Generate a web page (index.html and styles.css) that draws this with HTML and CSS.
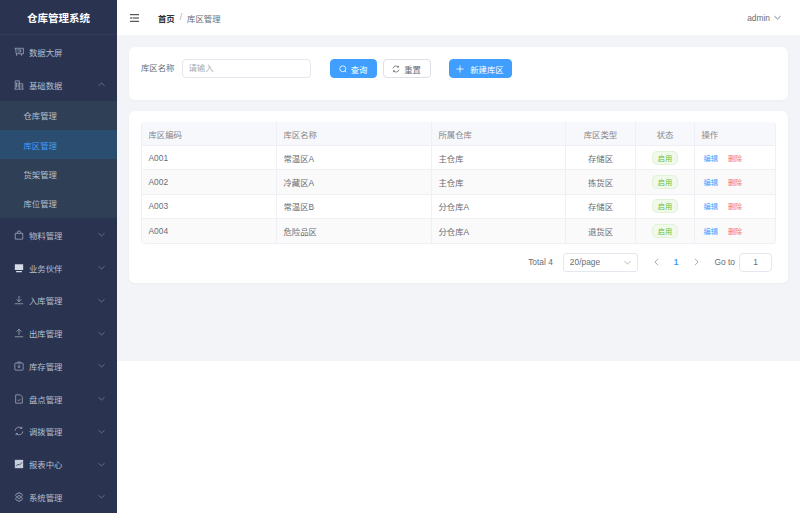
FILE: index.html
```html
<!DOCTYPE html>
<html lang="zh-CN">
<head>
<meta charset="utf-8">
<title>库区管理</title>
<link rel="stylesheet" href="styles.css">
</head>
<body>
<div class="layout">
  <aside class="sidebar">
    <div class="brand">仓库管理系统</div>
    <nav class="menu">
      <div class="item"><svg class="ico" viewBox="0 0 12 12"><path d="M.7 1.500h10.600v6.600H2.600L2 1.500M3 8.100v2.400M9 8.100v2.400M4 3.500h4.500L7.600 6H4.600"/></svg><span>数据大屏</span></div>
      <div class="item"><svg class="ico" viewBox="0 0 12 12"><path d="M1.500 11V1h5v10M6.500 4.500h4V11M.5 11h11M3 3v6M5 3v6M8.500 6.500V9"/></svg><span>基础数据</span><svg class="arr" viewBox="0 0 8 5"><path d="M.5 4 4 .8 7.500 4"/></svg></div>
      <div class="sub">
        <div class="subitem">仓库管理</div>
        <div class="subitem on">库区管理</div>
        <div class="subitem">货架管理</div>
        <div class="subitem">库位管理</div>
      </div>
      <div class="item"><svg class="ico" viewBox="0 0 12 12"><path d="M1.500 4h9v7h-9zM4 4V2.300C4 .7 8 .7 8 2.300V4"/></svg><span>物料管理</span><svg class="arr" viewBox="0 0 8 5"><path d="M.5 1 4 4.200 7.500 1"/></svg></div>
      <div class="item"><svg class="ico solid" viewBox="0 0 12 12"><path d="M1 1.500h10v7H1zM2.500 9.500h7V11h-7z"/></svg><span>业务伙伴</span><svg class="arr" viewBox="0 0 8 5"><path d="M.5 1 4 4.200 7.500 1"/></svg></div>
      <div class="item"><svg class="ico" viewBox="0 0 12 12"><path d="M1 10.500h10M6 1v7M3 5.300 6 8l3-2.700"/></svg><span>入库管理</span><svg class="arr" viewBox="0 0 8 5"><path d="M.5 1 4 4.200 7.500 1"/></svg></div>
      <div class="item"><svg class="ico" viewBox="0 0 12 12"><path d="M1 10.500h10M6 8.500V1.500M3 4.300 6 1.500l3 2.800"/></svg><span>出库管理</span><svg class="arr" viewBox="0 0 8 5"><path d="M.5 1 4 4.200 7.500 1"/></svg></div>
      <div class="item"><svg class="ico" viewBox="0 0 12 12"><rect x="1" y="2.500" width="10" height="8.500" rx="1"/><path d="M3.500 2.500C3.500 .5 8.500 .5 8.500 2.500M6 4v4M4.300 6.500 6 8l1.700-1.500"/></svg><span>库存管理</span><svg class="arr" viewBox="0 0 8 5"><path d="M.5 1 4 4.200 7.500 1"/></svg></div>
      <div class="item"><svg class="ico" viewBox="0 0 12 12"><path d="M2 1h5.500L10 3.500V11H2zM4.300 7l1.300 1.300L7.800 6"/></svg><span>盘点管理</span><svg class="arr" viewBox="0 0 8 5"><path d="M.5 1 4 4.200 7.500 1"/></svg></div>
      <div class="item"><svg class="ico" viewBox="0 0 12 12"><path d="M1.300 5.500A4.700 4.700 0 0 1 9 2.500M10.700 6.500A4.700 4.700 0 0 1 3 9.500M9.500 .8v2.200H7.300M2.500 11.200V9h2.200"/></svg><span>调拨管理</span><svg class="arr" viewBox="0 0 8 5"><path d="M.5 1 4 4.200 7.500 1"/></svg></div>
      <div class="item"><svg class="ico" viewBox="0 0 12 12"><path class="fill" d="M1 1h10v10H1z"/><path class="cut" d="M2.300 8.800 4.800 6.200l1.700 1.200 3.200-3.400"/></svg><span>报表中心</span><svg class="arr" viewBox="0 0 8 5"><path d="M.5 1 4 4.200 7.500 1"/></svg></div>
      <div class="item"><svg class="ico" viewBox="0 0 12 12"><path d="M4.800 1h2.400l.4 1.400 1.400-.4L10.200 4l-1 1.100v1.800l1 1.100-1.200 2-1.400-.4L7.200 11H4.800l-.4-1.400-1.400.4-1.200-2 1-1.100V5.100L1.800 4 3 2l1.400.4z"/><circle cx="6" cy="6" r="1.800"/></svg><span>系统管理</span><svg class="arr" viewBox="0 0 8 5"><path d="M.5 1 4 4.200 7.500 1"/></svg></div>
    </nav>
  </aside>
  <div class="main">
    <header class="topbar">
      <svg class="burger" viewBox="0 0 9 8"><path d="M0 .7h9M2.500 4H9M0 7.300h9M0 4h2"/></svg>
      <div class="crumbs"><b>首页</b><i>/</i><span>库区管理</span></div>
      <div class="user">admin<svg viewBox="0 0 8 5"><path d="M.5 1 4 4.200 7.500 1"/></svg></div>
    </header>
    <div class="content">
      <section class="card search">
        <label>库区名称</label>
        <div class="input">请输入</div>
        <button class="btn primary first"><svg viewBox="0 0 10 10"><circle cx="4.700" cy="4.700" r="3.700"/><path d="M7.500 7.500 9 9"/></svg>查询</button>
        <button class="btn reset"><svg viewBox="0 0 10 10"><path d="M1.200 4.200A3.900 3.900 0 0 1 8 2.600M8.800 5.800A3.900 3.900 0 0 1 2 7.400M8.200 1v1.800H6.400M1.800 9V7.200h1.800"/></svg>重置</button>
        <button class="btn primary add"><svg viewBox="0 0 10 10"><path d="M5 .5v9M.5 5h9"/></svg>新建库区</button>
      </section>
      <section class="card list">
        <div class="table">
          <div class="row head"><div>库区编码</div><div>库区名称</div><div>所属仓库</div><div class="c">库区类型</div><div class="c">状态</div><div>操作</div></div>
          <div class="row"><div>A001</div><div>常温区A</div><div>主仓库</div><div class="c">存储区</div><div class="c"><em class="tag">启用</em></div><div class="ops"><a class="edit">编辑</a><a class="del">删除</a></div></div>
          <div class="row alt"><div>A002</div><div>冷藏区A</div><div>主仓库</div><div class="c">拣货区</div><div class="c"><em class="tag">启用</em></div><div class="ops"><a class="edit">编辑</a><a class="del">删除</a></div></div>
          <div class="row"><div>A003</div><div>常温区B</div><div>分仓库A</div><div class="c">存储区</div><div class="c"><em class="tag">启用</em></div><div class="ops"><a class="edit">编辑</a><a class="del">删除</a></div></div>
          <div class="row alt"><div>A004</div><div>危险品区</div><div>分仓库A</div><div class="c">退货区</div><div class="c"><em class="tag">启用</em></div><div class="ops"><a class="edit">编辑</a><a class="del">删除</a></div></div>
        </div>
        <div class="pager">
          <span class="total">Total 4</span>
          <div class="select">20/page<svg viewBox="0 0 8 5"><path d="M.5 1 4 4.200 7.500 1"/></svg></div>
          <svg class="nav" viewBox="0 0 5 8"><path d="M4 .8.900 4 4 7.200"/></svg>
          <span class="page">1</span>
          <svg class="nav" viewBox="0 0 5 8"><path d="M1 .8 4.100 4 1 7.200"/></svg>
          <span class="goto">Go to</span>
          <div class="jump">1</div>
        </div>
      </section>
    </div>
  </div>
</div>
</body>
</html>
```
FILE: styles.css
```css
* { box-sizing: border-box; }
html, body { margin: 0; height: 100%; background: #fff; }
body { font-family: "Liberation Sans", "Noto Sans CJK SC", sans-serif; font-size: 8.400px; color: #6a6d73; overflow: hidden; }
svg { fill: none; stroke: currentColor; stroke-width: 1; }
.layout { display: flex; height: 513px; }
.sidebar { width: 117px; flex: none; background: #2a3350; color: #b4bfce; overflow: hidden; }
.brand { height: 35px; display: flex; align-items: center; justify-content: center; color: #fff; font-size: 10.500px; font-weight: 700; border-bottom: 1px solid #333c58; }
.menu { display: flex; flex-direction: column; }
.item { height: 32.750px; display: flex; align-items: center; padding: 1px 0 0 14px; gap: 5px; flex: none; }
.item span { flex: 1; }
.ico { width: 10px; height: 10px; flex: none; stroke-width: .9; color: #a5afc0; }
.ico.solid { fill: #d4dbe6; stroke: none; }
.ico .fill { fill: #c5cfdc; stroke: none; }
.ico .cut { stroke: #2a3350; }
.arr { width: 7px; height: 5px; margin-right: 12px; opacity: .5; flex: none; }
.sub { background: #2f3f56; margin-top: .300px; }
.subitem { height: 29.300px; display: flex; align-items: center; padding-left: 23.500px; }
.subitem.on { background: #2b4d70; color: #409eff; }
.main { flex: 1; min-width: 0; display: flex; flex-direction: column; }
.topbar { height: 35px; flex: none; background: #fff; display: flex; align-items: center; padding: 0 19px 0 13px; }
.burger { width: 9px; height: 8px; color: #303133; flex: none; }
.crumbs { margin-left: 19px; display: flex; gap: 5px; color: #6a6d73; }
.crumbs b { color: #303133; font-weight: 700; }
.crumbs i { font-style: normal; color: #a8abb2; }
.user { margin-left: auto; display: flex; align-items: center; gap: 4px; color: #6a6d73; }
.user svg { width: 7px; height: 5px; }
.content { height: 326px; background: #f3f4f8; padding: 12px 12px 0; display: flex; flex-direction: column; gap: 11px; }
.card { background: #fff; border-radius: 6px; box-shadow: 0 1px 3px rgba(0, 0, 0, .03); }
.search { height: 53px; display: flex; align-items: flex-start; padding: 12px 12px 0; }
.search label { line-height: 19px; }
.input { width: 129px; height: 19px; margin-left: 7px; border: 1px solid #e4e7ed; border-radius: 4px; padding-left: 6px; line-height: 17px; color: #a8abb2; }
.btn { height: 19px; border: 1px solid #dcdfe6; border-radius: 4px; background: #fff; color: #6a6d73; font: inherit; padding: 0; display: flex; align-items: center; justify-content: center; gap: 4px; }
.btn svg { width: 8px; height: 8px; }
.btn.primary { background: #409eff; border-color: #409eff; color: #fff; }
.btn.first { margin-left: 19px; width: 47px; }
.btn.reset { margin-left: 6px; width: 48px; }
.btn.add { margin-left: 18px; width: 63px; }
.btn.add svg { margin-right: 2px; }
.list { height: 172px; padding: 11px 12px 0; }
.table { border: 1px solid #eef0f5; border-top: 0; border-radius: 4px; overflow: hidden; }
.row { display: grid; grid-template-columns: 135px 155px 134px 70px 59px 1fr; height: 24.200px; border-bottom: 1px solid #eef0f5; }
.row:last-child { border-bottom: 0; }
.row > div { display: flex; align-items: center; padding-left: 6.500px; border-right: 1px solid #eef0f5; }
.row > div:last-child { border-right: 0; }
.row > .c { justify-content: center; padding-left: 0; }
.head { background: #f7f8fb; color: #84878e; }
.alt { background: #fafafa; }
.tag { font-style: normal; width: 26px; height: 14px; border: 1px solid #e1f3d8; background: #f0f9eb; color: #67c23a; border-radius: 5px; display: flex; align-items: center; justify-content: center; font-size: 7.200px; }
.ops { gap: 10px; padding-left: 8.500px !important; font-size: 7.200px; }
.edit { color: #409eff; }
.del { color: #f56c6c; }
.pager { display: flex; align-items: center; height: 19px; margin-top: 9px; padding-right: 4px; justify-content: flex-end; }
.total { margin-right: 10px; }
.select { width: 75px; height: 19px; border: 1px solid #e4e7ed; border-radius: 3px; padding: 0 6px; display: flex; align-items: center; justify-content: space-between; }
.select svg { width: 7px; height: 5px; color: #a8abb2; }
.nav { width: 5px; height: 8px; color: #a8abb2; }
.select + .nav { margin-left: 16px; }
.page { color: #409eff; font-weight: 700; margin: 0 15px; }
.goto { margin-left: 16px; }
.jump { width: 33px; height: 19px; margin-left: 4px; border: 1px solid #e4e7ed; border-radius: 4px; display: flex; align-items: center; justify-content: center; }
```
